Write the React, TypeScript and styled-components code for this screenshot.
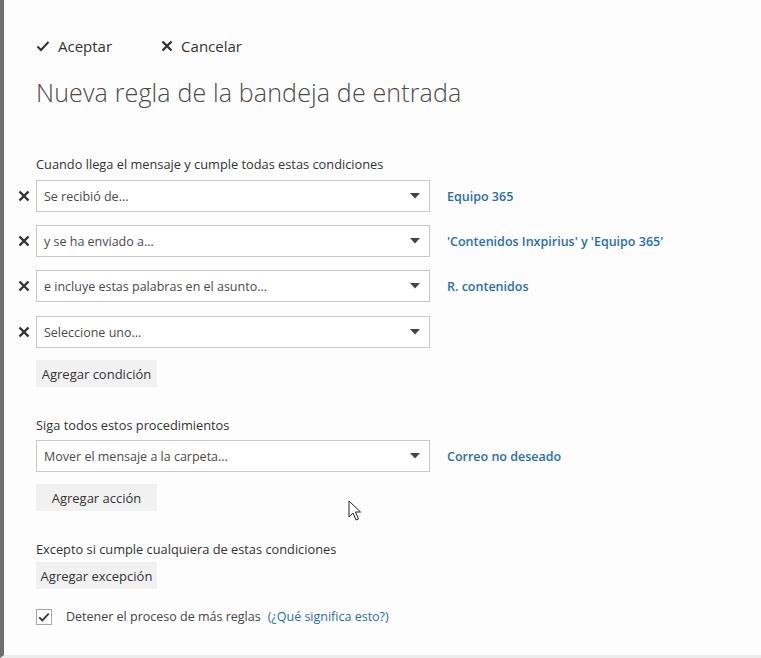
import React from 'react';
import styled, { createGlobalStyle } from 'styled-components';

const GlobalStyle = createGlobalStyle`
  html, body {
    margin: 0;
    padding: 0;
    background: #fdfdfd;
  }
  body {
    font-family: 'Open Sans', 'Liberation Sans', sans-serif;
    color: #333333;
  }
`;

const Page = styled.div`
  position: relative;
  width: 761px;
  height: 658px;
  box-sizing: border-box;
  border-left: 4px solid #6e6e6e;
  border-bottom: 3px solid #ececec;
  background: #fdfdfd;
  overflow: hidden;
`;

const Content = styled.div`
  display: flex;
  flex-direction: column;
  padding: 36px 0 0 32px;
`;

const Toolbar = styled.div`
  display: flex;
  align-items: center;
  gap: 49px;
  height: 20px;
`;

const ToolButton = styled.div`
  display: flex;
  align-items: center;
  gap: 8px;
  font-size: 15px;
  color: #333333;
  cursor: pointer;
`;

const Title = styled.h1`
  margin: 19px 0 0;
  font-size: 25px;
  font-weight: 300;
  color: #4a4a4a;
  letter-spacing: 0.15px;
  line-height: 34px;
`;

const SectionLabel = styled.div<{ $top: number }>`
  margin-top: ${(p) => p.$top}px;
  font-size: 12.8px;
  color: #333333;
  line-height: 18px;
`;

const Row = styled.div<{ $icon?: boolean; $top: number }>`
  display: flex;
  align-items: center;
  margin-left: ${(p) => (p.$icon ? '-18px' : '0')};
  margin-top: ${(p) => p.$top}px;
`;

const RemoveCell = styled.div`
  width: 18px;
  display: flex;
  align-items: center;
  justify-content: flex-start;
`;

const Select = styled.div`
  width: 394px;
  height: 32px;
  box-sizing: border-box;
  border: 1px solid #c8c8c8;
  background: #ffffff;
  display: flex;
  align-items: center;
  justify-content: space-between;
  padding: 0 9px 0 7px;
  font-size: 12.5px;
  color: #4a4a4a;
`;

const Value = styled.a`
  margin-left: 17px;
  font-size: 12.5px;
  font-weight: 600;
  color: #1f6fb8;
  text-decoration: none;
`;

const AddButton = styled.button<{ $top: number }>`
  align-self: flex-start;
  margin-top: ${(p) => p.$top}px;
  width: 121px;
  height: 27px;
  border: none;
  background: #f1f1f1;
  font-family: inherit;
  font-size: 13px;
  color: #333333;
  padding: 0;
  cursor: pointer;
`;

const CheckRow = styled.label`
  display: flex;
  align-items: center;
  margin-top: 19px;
  font-size: 12.5px;
  color: #444444;
`;

const Box = styled.span`
  width: 16px;
  height: 16px;
  box-sizing: border-box;
  border: 1px solid #a6a6a6;
  background: #ffffff;
  display: flex;
  align-items: center;
  justify-content: center;
  margin-right: 14px;
`;

const HelpLink = styled.a`
  margin-left: 7px;
  color: #1f6fb8;
  text-decoration: none;
`;

const Cursor = styled.svg`
  position: absolute;
  left: 344px;
  top: 500px;
`;

const CheckIcon = ({ size = 14 }: { size?: number }) => (
  <svg width={size} height={size} viewBox="0 0 14 14">
    <path d="M1.5 7.5 L5 11 L12.5 3" fill="none" stroke="#333" strokeWidth="2" />
  </svg>
);

const XIcon = () => (
  <svg width="12" height="12" viewBox="0 0 12 12">
    <path d="M1.5 1.5 L10.5 10.5 M10.5 1.5 L1.5 10.5" stroke="#333" strokeWidth="2.4" />
  </svg>
);

const Arrow = () => (
  <svg width="10" height="6" viewBox="0 0 10 6">
    <path d="M0 0 H10 L5 5.5 Z" fill="#444" />
  </svg>
);

const conditions = [
  { text: 'Se recibió de...', value: 'Equipo 365' },
  { text: 'y se ha enviado a...', value: "'Contenidos Inxpirius' y 'Equipo 365'" },
  { text: 'e incluye estas palabras en el asunto...', value: 'R. contenidos' },
  { text: 'Seleccione uno...', value: '' },
];

const App = () => {
  return (
    <Page>
      <GlobalStyle />
      <Content>
        <Toolbar>
          <ToolButton>
            <CheckIcon />
            Aceptar
          </ToolButton>
          <ToolButton>
            <XIcon />
            Cancelar
          </ToolButton>
        </Toolbar>
        <Title>Nueva regla de la bandeja de entrada</Title>

        <SectionLabel $top={46}>Cuando llega el mensaje y cumple todas estas condiciones</SectionLabel>
        {conditions.map((c, i) => (
          <Row $icon $top={i === 0 ? 7 : i === 3 ? 14 : 13} key={c.text}>
            <RemoveCell>
              <XIcon />
            </RemoveCell>
            <Select>
              {c.text}
              <Arrow />
            </Select>
            {c.value && <Value href="#">{c.value}</Value>}
          </Row>
        ))}
        <AddButton $top={12}>Agregar condición</AddButton>

        <SectionLabel $top={29}>Siga todos estos procedimientos</SectionLabel>
        <Row $top={6}>
          <Select>
            Mover el mensaje a la carpeta...
            <Arrow />
          </Select>
          <Value href="#">Correo no deseado</Value>
        </Row>
        <AddButton $top={12}>Agregar acción</AddButton>

        <SectionLabel $top={29}>Excepto si cumple cualquiera de estas condiciones</SectionLabel>
        <AddButton $top={4}>Agregar excepción</AddButton>

        <CheckRow>
          <Box>
            <CheckIcon size={12} />
          </Box>
          Detener el proceso de más reglas
          <HelpLink href="#">(¿Qué significa esto?)</HelpLink>
        </CheckRow>
      </Content>
      <Cursor width="14" height="22" viewBox="0 0 14 22">
        <path d="M1 1 L1 17 L5 13 L8 20 L10.5 19 L7.5 12 L12.5 12 Z" fill="#fff" stroke="#222" strokeWidth="1" />
      </Cursor>
    </Page>
  );
};

export default App;
